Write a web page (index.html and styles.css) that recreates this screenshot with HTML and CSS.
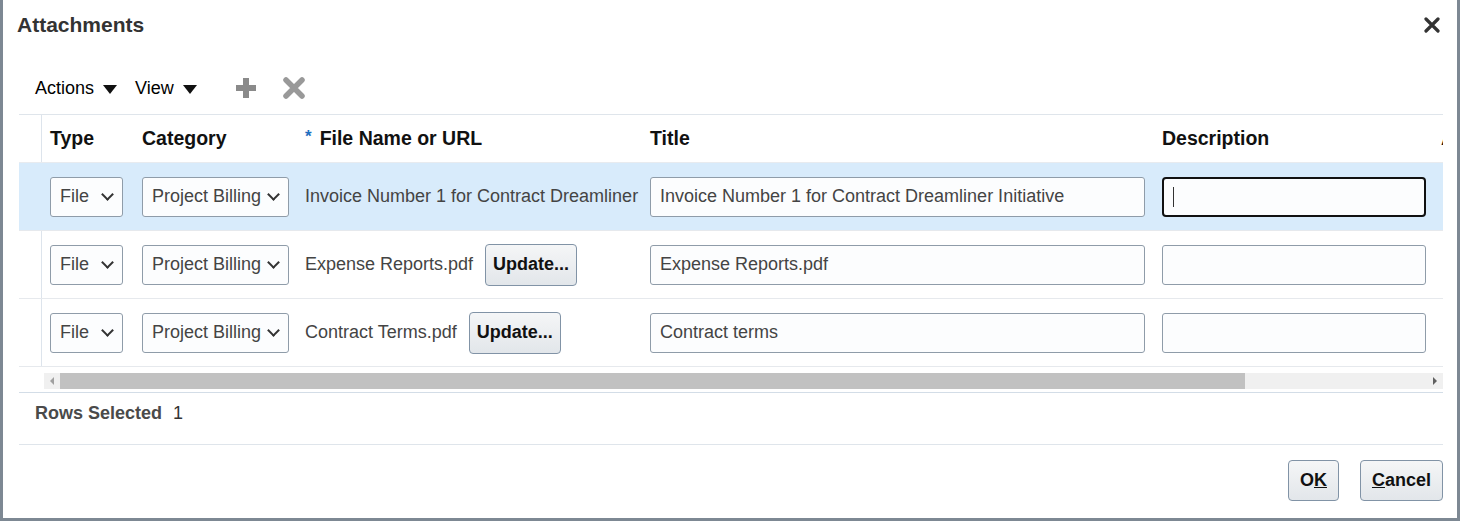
FILE: index.html
```html
<!DOCTYPE html>
<html lang="en">
<head>
    <meta charset="UTF-8">
    <title>Attachments</title>
    <link rel="stylesheet" href="styles.css">
</head>
<body>
    <div class="dialog">
        <div class="dialog-header">
            <h1>Attachments</h1>
            <span class="close">
                <svg width="16" height="16" viewBox="0 0 16 16"><path d="M2 2 L14 14 M14 2 L2 14" stroke="#333" stroke-width="3.2" stroke-linecap="round"/></svg>
            </span>
        </div>

        <div class="toolbar">
            <span class="menu">Actions <span class="caret"></span></span>
            <span class="menu">View <span class="caret"></span></span>
            <span class="tool">
                <svg width="22" height="22" viewBox="0 0 22 22"><path d="M11 1 V21 M1 11 H21" stroke="#8a8a8a" stroke-width="6"/></svg>
            </span>
            <span class="tool">
                <svg width="22" height="22" viewBox="0 0 22 22"><path d="M3 3 L19 19 M19 3 L3 19" stroke="#999" stroke-width="5.5" stroke-linecap="round"/></svg>
            </span>
        </div>

        <div class="table">
            <div class="table-clip">
                <div class="row head">
                    <div class="cell gutter"></div>
                    <div class="cell">Type</div>
                    <div class="cell">Category</div>
                    <div class="cell"><span class="req">*</span>File Name or URL</div>
                    <div class="cell">Title</div>
                    <div class="cell">Description</div>
                    <div class="cell">Attached By</div>
                </div>

                <div class="row selected">
                    <div class="cell gutter"></div>
                    <div class="cell"><div class="select type-select">File <span class="chev"></span></div></div>
                    <div class="cell"><div class="select cat-select">Project Billing <span class="chev"></span></div></div>
                    <div class="cell file-name">Invoice Number 1 for Contract Dreamliner</div>
                    <div class="cell"><div class="input title-input">Invoice Number 1 for Contract Dreamliner Initiative</div></div>
                    <div class="cell"><div class="input desc-input focused"><span class="caret-line"></span></div></div>
                    <div class="cell"></div>
                </div>

                <div class="row">
                    <div class="cell gutter"></div>
                    <div class="cell"><div class="select type-select">File <span class="chev"></span></div></div>
                    <div class="cell"><div class="select cat-select">Project Billing <span class="chev"></span></div></div>
                    <div class="cell file-name">Expense Reports.pdf <button class="btn update">Update...</button></div>
                    <div class="cell"><div class="input title-input">Expense Reports.pdf</div></div>
                    <div class="cell"><div class="input desc-input"></div></div>
                    <div class="cell"></div>
                </div>

                <div class="row">
                    <div class="cell gutter"></div>
                    <div class="cell"><div class="select type-select">File <span class="chev"></span></div></div>
                    <div class="cell"><div class="select cat-select">Project Billing <span class="chev"></span></div></div>
                    <div class="cell file-name">Contract Terms.pdf <button class="btn update">Update...</button></div>
                    <div class="cell"><div class="input title-input">Contract terms</div></div>
                    <div class="cell"><div class="input desc-input"></div></div>
                    <div class="cell"></div>
                </div>
            </div>

            <div class="hscroll">
                <span class="arrow left"></span>
                <span class="thumb"></span>
                <span class="arrow right"></span>
            </div>
        </div>

        <div class="status">Rows Selected <span class="count">1</span></div>

        <div class="footer">
            <button class="btn action">O<u>K</u></button>
            <button class="btn action"><u>C</u>ancel</button>
        </div>
    </div>
</body>
</html>
```

FILE: styles.css
```css
* {
    margin: 0;
    padding: 0;
    box-sizing: border-box;
}

body {
    font-family: "Liberation Sans", Arial, sans-serif;
    background: #4d5660;
    width: 1460px;
    height: 521px;
    overflow: hidden;
    color: #333;
}

.dialog {
    width: 1460px;
    height: 521px;
    background: #fff;
    border: 3px solid #7d8893;
    border-top: none;
    display: flex;
    flex-direction: column;
}

.dialog-header {
    height: 50px;
    display: flex;
    align-items: center;
    justify-content: space-between;
    padding: 0 17px 0 14px;
}

.dialog-header h1 {
    font-size: 21px;
    font-weight: 700;
    color: #333;
}

.close {
    display: flex;
}

.toolbar {
    height: 64px;
    padding: 12px 0 0 32px;
    display: flex;
    align-items: center;
    font-size: 18px;
    color: #000;
}

.menu {
    display: flex;
    align-items: center;
    margin-right: 18px;
}

.caret {
    width: 0;
    height: 0;
    border-left: 7px solid transparent;
    border-right: 7px solid transparent;
    border-top: 9px solid #111;
    margin-left: 9px;
    margin-top: 3px;
}

.tool {
    display: flex;
    margin-left: 20px;
    margin-right: 6px;
}

.table {
    margin: 0 14px 0 16px;
    border-top: 1px solid #dfe5eb;
}

.table-clip {
    overflow: hidden;
}

.row {
    display: grid;
    grid-template-columns: 23px 92px 163px 345px 512px 279px 200px;
    height: 68px;
    border-bottom: 1px solid #e6e9ed;
    font-size: 18px;
}

.row.head {
    height: 48px;
    font-size: 19.5px;
    font-weight: 700;
    color: #111;
    border-bottom-color: #e8ebef;
}

.row.selected {
    background: #d8ebfb;
}

.cell {
    display: flex;
    align-items: center;
    padding-left: 8px;
    white-space: nowrap;
    overflow: hidden;
}

.gutter {
    padding: 0;
    border-right: 1px solid #dde4ec;
}

.row.selected .gutter {
    border-right-color: #d8ebfb;
}

.req {
    color: #1f6fc0;
    font-size: 17px;
    margin-right: 8px;
    align-self: flex-start;
    margin-top: 12px;
}

.select,
.input {
    height: 40px;
    border: 1px solid #8f9ca9;
    border-radius: 3px;
    background: #fcfdfe;
    color: #444;
    display: flex;
    align-items: center;
}

.select {
    justify-content: space-between;
    padding: 0 8px 0 9px;
}

.type-select {
    width: 73px;
}

.cat-select {
    width: 147px;
}

.chev {
    width: 9px;
    height: 9px;
    border-right: 2px solid #333;
    border-bottom: 2px solid #333;
    transform: rotate(45deg);
    margin: -5px 2px 0 0;
}

.file-name {
    color: #444;
}

.input {
    padding-left: 9px;
}

.title-input {
    width: 495px;
}

.desc-input {
    width: 264px;
}

.desc-input.focused {
    border: 2px solid #111;
    border-radius: 4px;
}

.caret-line {
    width: 1px;
    height: 20px;
    background: #333;
}

.btn {
    font-family: "Liberation Sans", Arial, sans-serif;
    font-size: 18px;
    font-weight: 700;
    color: #111;
    background: linear-gradient(#f5f6f7, #e2e6ea);
    border: 1px solid #8193a6;
    border-radius: 4px;
}

.update {
    height: 42px;
    padding: 0 7px;
    margin-left: 12px;
}

.hscroll {
    display: flex;
    height: 16px;
    margin: 6px 0 3px 25px;
    background: #f0f0f0;
    align-items: center;
}

.arrow {
    width: 16px;
    height: 16px;
    display: flex;
    align-items: center;
    justify-content: center;
}

.arrow.left::before,
.arrow.right::before {
    content: "";
    border-top: 4px solid transparent;
    border-bottom: 4px solid transparent;
}

.arrow.left::before {
    border-right: 4px solid #a0a0a0;
}

.arrow.right::before {
    border-left: 4px solid #606060;
}

.thumb {
    width: 1185px;
    height: 16px;
    background: #c1c1c1;
}

.hscroll .right {
    margin-left: auto;
}

.status {
    margin: 0 14px 0 16px;
    border-top: 1px solid #d3dde7;
    border-bottom: 1px solid #dfe5eb;
    height: 53px;
    padding: 9px 0 0 16px;
    line-height: 22px;
    font-size: 18px;
    font-weight: 700;
    color: #4a4a4a;
}

.count {
    font-weight: 400;
    color: #333;
    margin-left: 6px;
}

.footer {
    display: flex;
    justify-content: flex-end;
    gap: 21px;
    margin: 15px 14px 0 0;
}

.action {
    height: 41px;
    padding: 0 11px;
}
```
